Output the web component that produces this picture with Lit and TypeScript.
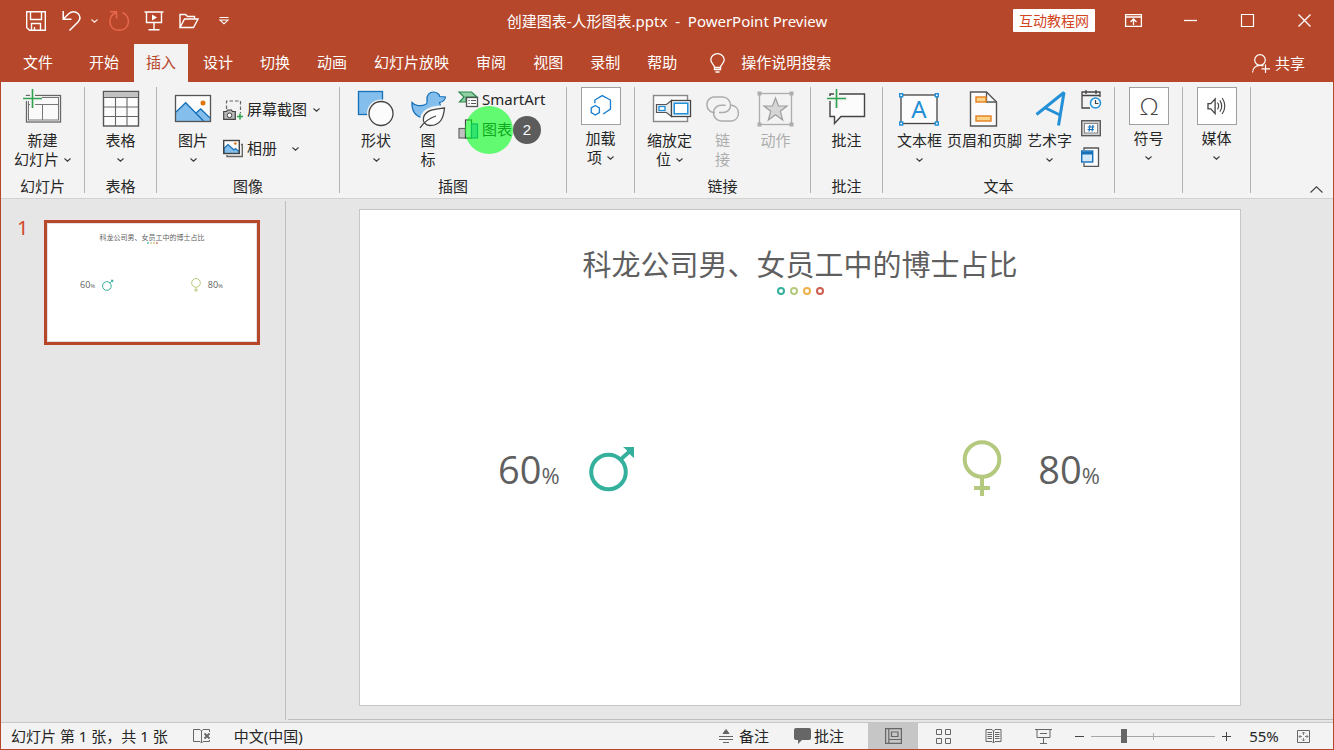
import { LitElement, html, css, svg, nothing } from "lit";
import type { TemplateResult } from "lit";
import { customElement, property, state } from "lit/decorators.js";
import { classMap } from "lit/directives/class-map.js";

const chevron = html`<svg class="chev" viewBox="0 0 7 4" aria-hidden="true">
  <path d="M.5 .5 3.5 3.2 6.5 .5" fill="none" stroke="currentColor" stroke-width="1.1" />
</svg>`;

/* 40 x 40 artwork used by the large ribbon buttons */
const art = {
  newSlide: svg`
    <rect x="4.5" y="7.5" width="34" height="26.5" fill="#fafafa" stroke="#666" stroke-width="1.300"/>
    <rect x="6.5" y="9.5" width="30" height="22.5" fill="#fafafa" stroke="#777"/>
    <path d="M7 16.5H36.500M20.500 17V32" stroke="#777"/>
    <path d="M10.500 0V20M0 10.500H20" stroke="#f3f3f3" stroke-width="5"/>
    <path d="M10.500 1V20M1 10.500H20" stroke="#2ea44f" stroke-width="1.600"/>`,
  table: svg`
    <rect x="2.500" y="3.500" width="35" height="34.500" fill="#fcfcfc" stroke="#555" stroke-width="1.400"/>
    <rect x="3" y="4" width="34" height="5" fill="#c2c2c2"/>
    <path d="M3 9.500H37M3 19H37M3 28.500H37M14.500 9.500V38M26 9.500V38" stroke="#666" stroke-width="1.100"/>`,
  picture: svg`
    <rect x="2.500" y="7.500" width="35" height="26" fill="#fcfcfc"/>
    <path d="M3 24 12.700 14.700 31 33H3Z" fill="#83beec"/>
    <path d="M22.500 26 27.700 21 37 30.500V33H29Z" fill="#83beec"/>
    <path d="M3 24 12.700 14.700 30.500 33M22.500 25.500 27.700 21 37 30" fill="none" stroke="#1670b8" stroke-width="1.300"/>
    <circle cx="30" cy="15" r="2.500" fill="#e07410"/>
    <rect x="2.500" y="7.500" width="35" height="26" fill="none" stroke="#555" stroke-width="1.300"/>`,
  shapes: svg`
    <rect x="2.500" y="3.500" width="24" height="23" fill="#83beec" stroke="#1670b8" stroke-width="1.300"/>
    <circle cx="25" cy="25.500" r="14" fill="#f3f3f3"/>
    <circle cx="25" cy="25.500" r="12" fill="#fcfcfc" stroke="#444" stroke-width="1.300"/>`,
  icons: svg`
    <path d="M4 14.500C7 18 13 18.500 17.500 16.500 19 15.500 19.500 14 19 12 18.500 7 21.500 4 25.500 4 29 4 31.500 6.500 31.800 8.500L37.500 9C37 12 34.500 14 31.500 14.500 34 20 31 28 23 29.500H14C7 28.500 3.500 22 4 14.500Z" fill="#83beec" stroke="#1670b8" stroke-width="1.200"/>
    <path d="M37 19C29 20 17 20 14.500 29 13.500 34 17 38.500 22 38.500 33 38.500 36 30 37 19Z" fill="#fcfcfc" stroke="#f3f3f3" stroke-width="4"/>
    <path d="M36.500 20C29 21 18 21 15.500 29.500 14.500 34 17.500 37.500 22 37.500 32.500 37.500 35.500 30 36.500 20Z" fill="#fcfcfc" stroke="#444" stroke-width="1.300"/>
    <path d="M12 40C16 34 20 30.500 28 28" fill="none" stroke="#444" stroke-width="1.300"/>`,
  zoom: svg`
    <rect x="3.500" y="7.500" width="34" height="26" fill="#fafafa" stroke="#888" stroke-width="1.400"/>
    <path d="M6.500 16.500H16.500L21.500 12.500V28.500L16.500 24.500H6.500Z" fill="#ededed" stroke="#555" stroke-width="1.200"/>
    <rect x="9" y="18.500" width="6" height="4" fill="#fff" stroke="#2490d8" stroke-width="1.400"/>
    <rect x="21.500" y="12.500" width="19" height="16" fill="#fff" stroke="#444" stroke-width="1.300"/>
    <rect x="24.200" y="15.200" width="13.600" height="10.600" fill="#fff" stroke="#2490d8" stroke-width="1.600"/>`,
  link: svg`
    <g fill="none" stroke="#adadad" stroke-width="1.500">
      <path d="M12 24.500H10A8 8 0 0 1 10 9H19.500A8 8 0 0 1 27.500 18C27.300 21.500 24 24.500 20 24.500H16"/>
      <path d="M27 17.300H29A8 8 0 0 1 29 33H18.500A8 8 0 0 1 10.500 24.500C10.500 20.500 14 17.300 18 17.300H22.500"/>
    </g>`,
  action: svg`
    <rect x="3.500" y="5.500" width="32" height="31" fill="none" stroke="#adadad" stroke-width="1.300"/>
    <path d="M1.500 3.500h4v4h-4zM33.500 3.500h4v4h-4zM1.500 34.500h4v4h-4zM33.500 34.500h4v4h-4z" fill="#adadad"/>
    <path d="M19.500 10 22.500 18H31L24.300 23.300 26.700 32 19.500 26.800 12.300 32 14.700 23.300 8 18H16.500Z" fill="#d6d6d6" stroke="#9d9d9d" stroke-width="1.200"/>`,
  comment: svg`
    <path d="M3 6H37.500V28.500H14L7.500 35.500V28.500H3Z" fill="#fcfcfc" stroke="#444" stroke-width="1.400"/>
    <path d="M9.500 0V20M0 10.500H20" stroke="#f3f3f3" stroke-width="5"/>
    <path d="M9.500 1V20M0 10.500H19" stroke="#2ea44f" stroke-width="1.600"/>`,
  textBox: svg`
    <rect x="2" y="7" width="36" height="28.500" fill="#fcfcfc" stroke="#444" stroke-width="1.300"/>
    <path d="M.700 5.700h3v3h-3zM36.300 5.700h3v3h-3zM.700 34h3v3h-3zM36.300 34h3v3h-3z" fill="#fff" stroke="#2490d8" stroke-width="1.400"/>
    <text x="20" y="30" text-anchor="middle" font-size="24" fill="#2490d8">A</text>`,
  headerFooter: svg`
    <path d="M6.500 4H22.500L32.500 14V38H6.500Z" fill="#fcfcfc" stroke="#555" stroke-width="1.400"/>
    <path d="M22.500 4V14H32.500" fill="none" stroke="#555" stroke-width="1.300"/>
    <rect x="12" y="9" width="10" height="5" fill="#fbd48a" stroke="#e58020" stroke-width="1.400"/>
    <rect x="12" y="28" width="15" height="5" fill="#fbd48a" stroke="#e58020" stroke-width="1.400"/>`,
  wordArt: svg`
    <path d="M6.500 26.500 34 4.500 28.500 37.500M15.500 20 30 27" fill="none" stroke="#2490d8" stroke-width="3" stroke-linejoin="bevel"/>`,
};

/* 40 x 38 artwork for the framed buttons */
const framed = {
  addIns: svg`
    <path d="M13.500 16V12.700L21.300 8 30 12.700V22.300L22.300 27.500" fill="none" stroke="#1a7fd0" stroke-width="1.400"/>
    <path d="M14 18.500 18.300 21V26L14 28.500 9.700 26V21Z" fill="none" stroke="#1a7fd0" stroke-width="1.400"/>`,
  symbol: svg`<text x="20" y="28" text-anchor="middle" font-size="26" font-weight="300" font-family="Open Sans" fill="#444">Ω</text>`,
  media: svg`
    <path d="M10.500 16.500H13.500L18 11.500V27L13.500 22H10.500Z" fill="none" stroke="#444" stroke-width="1.400"/>
    <path d="M20.500 15.500Q23 19 20.500 22.500M23 13Q27 19 23 25M25.500 10.500Q31 19 25.500 27.500" fill="none" stroke="#444" stroke-width="1.200"/>`,
};

/* 20 x 20 artwork for the small ribbon buttons */
const small = {
  screenshot: svg`
    <path d="M3.500 9V1H17.500V13" fill="none" stroke="#666" stroke-width="1.200" stroke-dasharray="3.500 2"/>
    <path d="M.700 11.500H3.500L4.500 10H8.500L9.500 11.500H12.300V19.300H.700Z" fill="#b8b8b8" stroke="#444" stroke-width="1.200"/>
    <circle cx="6.500" cy="15.300" r="2.300" fill="#fff" stroke="#444"/>
    <path d="M17 13.500V19.500M14 16.500H20" stroke="#2ea44f" stroke-width="1.600"/>`,
  album: svg`
    <path d="M18 5.500H19.300V17.500H4V16" fill="none" stroke="#666" stroke-width="1.400"/>
    <rect x=".700" y="1.500" width="15.600" height="13" fill="#fcfcfc"/>
    <path d="M1 9.500 5 5.500 11 11 12.500 9.500 16 12.500V14.500H1Z" fill="#83beec" stroke="#1670b8" stroke-width="1.200"/>
    <circle cx="12.300" cy="4.500" r="1.300" fill="#e07410"/>
    <rect x=".700" y="1.500" width="15.600" height="13" fill="none" stroke="#444" stroke-width="1.400"/>`,
  smartArt: svg`
    <path d="M1 3H13.500L19 8H8V13H1.500L6 8Z" fill="#8fd0a4" stroke="#2e8b4f" stroke-width="1.200"/>
    <rect x="8.500" y="8.500" width="11" height="9" fill="#fcfcfc" stroke="#555" stroke-width="1.300"/>
    <path d="M10.500 11.500h1.200M10.500 14.500h1.200M13 11.500h5M13 14.500h5" stroke="#555"/>`,
  chart: svg`
    <rect x="1" y="9.500" width="6.500" height="9.500" fill="#c2c2c2" stroke="#666" stroke-width="1.200"/>
    <rect x="7.500" y="1" width="6" height="18" fill="#fcfcfc" stroke="#444" stroke-width="1.200"/>
    <rect x="13.500" y="5" width="6" height="14" fill="#83beec" stroke="#1670b8" stroke-width="1.200"/>`,
  calendar: svg`
    <path d="M9 19H1V3H19V8M1 6.500H19M5 1V5M15 1V5" fill="none" stroke="#444" stroke-width="1.300"/>
    <circle cx="14.500" cy="14" r="5" fill="#fcfcfc" stroke="#2490d8" stroke-width="1.500"/>
    <path d="M14.500 11V14.500H17.500" fill="none" stroke="#444" stroke-width="1.200"/>`,
  number: svg`
    <rect x=".700" y="2.700" width="18.600" height="15" fill="#d0d0d0" stroke="#555" stroke-width="1.300"/>
    <rect x="3.500" y="5.500" width="13" height="9.500" fill="#fcfcfc" stroke="#888"/>
    <path d="M9 7 8 13.500M12 7 11 13.500M6.800 9H13.300M6.500 11.500H13" stroke="#1670b8" stroke-width="1.200"/>`,
  object: svg`
    <path d="M3 3V1H17.500V19.300H3V16" fill="#fcfcfc" stroke="#555" stroke-width="1.300"/>
    <rect x=".700" y="4" width="11" height="11" fill="#d3e8f8" stroke="#1670b8" stroke-width="1.400"/>
    <path d="M1 6H11.500" stroke="#1670b8" stroke-width="3"/>`,
};

@customElement("slide-page")
export class SlidePage extends LitElement {
  @property({ type: Boolean, reflect: true }) mini = false;

  static styles = css`
    :host {
      display: block;
      background: #fff;
      color: #5f5f5f;
      font-family: "Open Sans", "Noto Sans CJK SC", sans-serif;
    }
    .title {
      margin: 0;
      padding-top: 35px;
      font-size: 29px;
      line-height: 40px;
      font-weight: 400;
      text-align: center;
      white-space: nowrap;
    }
    .dots {
      display: flex;
      justify-content: center;
      gap: 5px;
      margin-top: 2px;
    }
    .dot {
      box-sizing: border-box;
      width: 8px;
      height: 8px;
      border: 2px solid;
      border-radius: 50%;
    }
    .teal { color: #35b09c; }
    .green { color: #b4c97e; }
    .amber { color: #eeb04c; }
    .red { color: #cd5f50; }
    .figures {
      display: flex;
      justify-content: space-between;
      margin-top: 145px;
      padding: 0 140px 0 138px;
    }
    .figure {
      display: flex;
      align-items: flex-start;
      gap: 29px;
    }
    .figure.right {
      gap: 36px;
    }
    .sign {
      display: block;
      height: 56px;
    }
    .value {
      font-size: 38px;
      line-height: 58px;
    }
    .unit {
      font-size: 22px;
    }
    :host([mini]) .title {
      padding-top: 9px;
      font-size: 7px;
      line-height: 9px;
    }
    :host([mini]) .dots {
      gap: 1px;
      margin-top: 0;
    }
    :host([mini]) .dot {
      width: 2px;
      height: 2px;
      border-width: 1px;
    }
    :host([mini]) .figures {
      margin-top: 34px;
      padding: 0 33px 0 32px;
    }
    :host([mini]) .figure {
      gap: 7px;
    }
    :host([mini]) .sign {
      height: 14px;
    }
    :host([mini]) .value {
      font-size: 9px;
      line-height: 14px;
    }
    :host([mini]) .unit {
      font-size: 6px;
    }
  `;

  render() {
    return html`
      <h2 class="title">科龙公司男、女员工中的博士占比</h2>
      <div class="dots">
        ${["teal", "green", "amber", "red"].map((c) => html`<span class="dot ${c}"></span>`)}
      </div>
      <div class="figures">
        <div class="figure">
          <span class="value">60<span class="unit">%</span></span>
          <svg class="sign teal" viewBox="0 0 46 56" role="img" aria-label="男">
            <circle cx="19.500" cy="32" r="17.300" fill="none" stroke="currentColor" stroke-width="4"/>
            <path d="M31 20 40 12" stroke="currentColor" stroke-width="4"/>
            <path d="M34 7H45V18L42 15.500 37 9.500Z" fill="currentColor"/>
          </svg>
        </div>
        <div class="figure right">
          <svg class="sign green" viewBox="0 0 40 56" role="img" aria-label="女">
            <circle cx="20" cy="19.500" r="17.300" fill="none" stroke="currentColor" stroke-width="4"/>
            <path d="M20 38V56M12 48H28" stroke="currentColor" stroke-width="4"/>
          </svg>
          <span class="value">80<span class="unit">%</span></span>
        </div>
      </div>
    `;
  }
}

@customElement("app-root")
export class AppRoot extends LitElement {
  @state() private tab = "插入";

  static styles = css`
    :host {
      display: block;
      font-family: "Noto Sans", "Noto Sans CJK SC", sans-serif;
      font-size: 15px;
      line-height: 19px;
      color: #262626;
    }
    * { box-sizing: border-box; }
    svg { display: block; flex: none; overflow: visible; }
    button {
      margin: 0;
      padding: 0;
      border: 0;
      background: none;
      color: inherit;
      font: inherit;
    }
    .app {
      display: flex;
      flex-direction: column;
      height: 100vh;
      border: 1px solid #b7472a;
      background: #e6e6e6;
      overflow: hidden;
    }
    .chev { width: 7px; height: 4px; opacity: 0.9; }

    /* title bar */
    .titlebar {
      display: grid;
      grid-template-columns: 1fr auto 1fr;
      align-items: center;
      height: 43px;
      padding-bottom: 4px;
      background: #b7472a;
      color: #fff;
    }
    .quick { display: flex; align-items: center; padding-left: 17px; }
    .qbtn { display: flex; justify-content: center; width: 35px; }
    .qbtn.narrow { width: 13px; }
    .qbtn.off { color: #e8684d; }
    .doc { padding-top: 2px; white-space: pre; }
    .window { display: flex; justify-content: flex-end; align-items: center; }
    .brand {
      margin-right: 10px;
      padding: 2px 6px;
      border-radius: 1px;
      background: #fff;
      color: #d2451e;
      font-size: 14px;
      text-decoration: none;
    }
    .wbtn { display: flex; justify-content: center; width: 57px; }

    /* tabs */
    .tabs {
      display: flex;
      gap: 3px;
      height: 38px;
      padding-left: 1px;
      background: #b7472a;
      color: #fff;
    }
    .tab { padding: 0 12px 2px; white-space: nowrap; }
    .tab.file { padding: 0 21px 2px; }
    .tab.active { background: #f3f3f3; color: #b7472a; }
    .tell { display: flex; align-items: center; gap: 16px; margin-left: 18px; padding-bottom: 1px; }
    .share { display: flex; align-items: center; gap: 5px; margin: 0 28px 0 auto; }

    /* ribbon */
    .ribbon {
      display: flex;
      flex: none;
      height: 117px;
      padding: 5px 0;
      border-bottom: 1px solid #d2d2d2;
      background: #f3f3f3;
    }
    .group {
      display: flex;
      flex: none;
      flex-direction: column;
      justify-content: space-between;
      border-right: 1px solid #b4b4b4;
    }
    .w68 { width: 68px; }
    .w72 { width: 72px; }
    .w84 { width: 84px; }
    .w176 { width: 176px; }
    .w183 { width: 183px; }
    .w227 { width: 227px; }
    .w232 { width: 232px; }
    .items { display: flex; justify-content: center; }
    .items.start { justify-content: flex-start; padding-left: 10px; }
    .items.text { gap: 5px; padding-left: 1px; }
    .caption { line-height: 14px; text-align: center; }
    .big {
      display: flex;
      flex-direction: column;
      align-items: center;
      white-space: nowrap;
    }
    .big:disabled { color: #adadad; }
    .w46 { width: 46px; }
    .w52 { width: 52px; }
    .w60 { width: 60px; }
    .art { width: 40px; height: 44px; padding: 1px 0 3px; }
    .frame {
      width: 40px;
      height: 38px;
      margin-bottom: 4px;
      border: 1px solid #a0a0a0;
      background: #fff;
    }
    .line { display: flex; align-items: center; justify-content: center; gap: 5px; min-height: 19px; }
    .stack { display: flex; flex-direction: column; align-items: flex-start; margin-left: 4px; }
    .row {
      position: relative;
      display: flex;
      align-items: center;
      gap: 4px;
      white-space: nowrap;
    }
    .row .chev { margin-left: 2px; }
    .row .chev.far { margin-left: 11px; }
    .tall { padding-top: 3px; }
    .tall .row { height: 39px; }
    .short { gap: 6px; }
    .short .row { height: 24px; }
    .mini { gap: 9px; padding-top: 2px; }
    .ico { width: 20px; height: 20px; }
    .halo {
      position: absolute;
      top: -11px;
      left: 7px;
      width: 48px;
      height: 48px;
      border-radius: 50%;
      background: rgba(0, 255, 25, 0.6);
    }
    .step {
      position: absolute;
      top: -1px;
      left: 55px;
      width: 28px;
      height: 28px;
      border-radius: 50%;
      background: #5c5c5c;
      color: #fff;
      font: 15px/28px "Liberation Sans", sans-serif;
      text-align: center;
    }
    .collapse { align-self: flex-end; margin: 0 10px 0 auto; }

    /* work area */
    .work { display: flex; flex: 1; min-height: 0; }
    .outline {
      display: flex;
      align-items: flex-start;
      flex: none;
      width: 285px;
      margin: 2px 0;
      padding: 19px 25px 0 16px;
      border-right: 1px solid #bebebe;
    }
    .num { width: 27px; font-size: 20px; line-height: 16px; color: #d24726; }
    .thumb {
      flex: 1;
      border: 3px solid #b7472a;
      padding: 1px;
      background: #e2e2e2;
    }
    .thumb slide-page { height: 117px; }
    .stage {
      display: flex;
      justify-content: center;
      flex: 1;
      min-width: 0;
      margin: 0 0 2px 2px;
      padding: 10px 21px 13px 0;
      border-bottom: 1px solid #bebebe;
    }
    .page {
      box-sizing: content-box;
      aspect-ratio: 16 / 9;
      border: 1px solid #c6c6c6;
    }

    /* status bar */
    .status {
      display: flex;
      align-items: center;
      flex: none;
      height: 27px;
      border-top: 1px solid #c6c6c6;
      background: #f3f3f3;
      white-space: nowrap;
    }
    .status svg { color: #666; }
    .where { margin-left: 10px; }
    .spell { margin: 0 23px 0 25px; }
    .right { display: flex; align-items: center; height: 100%; margin-left: auto; }
    .sbtn { display: flex; align-items: center; gap: 6px; margin-right: 24px; }
    .sbtn.tight { gap: 3px; }
    .view { display: flex; align-items: center; justify-content: center; width: 50px; height: 100%; }
    .view.on { background: #c6c6c6; }
    .step-btn { width: 23px; display: flex; justify-content: center; }
    .slider {
      appearance: none;
      width: 124px;
      height: 14px;
      margin: 0;
      background:
        linear-gradient(#b0b0b0, #b0b0b0) center / 1px 7px no-repeat,
        linear-gradient(#a6a6a6, #a6a6a6) center / 100% 1px no-repeat;
    }
    .slider::-webkit-slider-thumb {
      appearance: none;
      width: 6px;
      height: 14px;
      background: #666;
    }
    .pct { width: 32px; margin: 0 17px 0 10px; }
    .fit { margin-right: 23px; }
  `;

  private big(
    label: string,
    icon: unknown,
    opts: { line2?: string; drop?: boolean; cls?: string; off?: boolean; frame?: boolean } = {},
  ): TemplateResult {
    const { line2, drop, cls = "", off = false, frame = false } = opts;
    return html`<button class="big ${cls}" ?disabled=${off}>
      <svg class=${frame ? "frame" : "art"} viewBox=${frame ? "0 0 40 38" : "0 0 40 40"} aria-hidden="true">${icon}</svg>
      <span class="line">${label}</span>
      ${line2 || drop ? html`<span class="line">${line2 ?? nothing}${drop ? chevron : nothing}</span>` : nothing}
    </button>`;
  }

  private ico(icon: unknown) {
    return html`<svg class="ico" viewBox="0 0 20 20" aria-hidden="true">${icon}</svg>`;
  }

  private group(width: string, caption: string, body: unknown, cls = "") {
    return html`<section class="group ${width}">
      <div class="items ${cls}">${body}</div>
      <div class="caption">${caption}</div>
    </section>`;
  }

  private renderTitle() {
    return html`<header class="titlebar">
      <div class="quick">
        <button class="qbtn" aria-label="保存">
          <svg width="20" height="20" viewBox="0 0 20 20" fill="none" stroke="currentColor" stroke-width="1.400">
            <path d="M.700 .700H19.300V19.300H3.500L.700 16.500ZM4.500 1V8.500H15.500V1M5.500 19V12.500H14.500V19M8.500 16V19"/>
          </svg>
        </button>
        <button class="qbtn" aria-label="撤消">
          <svg width="20" height="20" viewBox="0 0 20 20" fill="none" stroke="currentColor" stroke-width="1.500">
            <path d="M2.200 0V8.200H10.500M2.500 7.800 8 2.500C10.500 0 14.500 0 17 2.500 19.500 5.200 19.300 8.500 17 11L8.500 19.500"/>
          </svg>
        </button>
        <button class="qbtn narrow" aria-label="撤消选项">${chevron}</button>
        <button class="qbtn off" aria-label="重复">
          <svg width="22" height="20" viewBox="0 0 22 20" fill="none" stroke="currentColor" stroke-width="1.500">
            <path d="M2 .800H8.500V7.500M8 1.500C-1.500 6 .500 19.200 11 19.200 21.500 19.200 24 6 14.500 1.500"/>
          </svg>
        </button>
        <button class="qbtn" aria-label="从头开始">
          <svg width="20" height="20" viewBox="0 0 20 20" fill="none" stroke="currentColor" stroke-width="1.400">
            <path d="M.500 1H19.500M2.500 1V11.500H17.500V1M10 12V18.500M4.500 18.800H15.500"/>
            <path d="M8 3.500 13 6.500 8 9.500Z" fill="currentColor" stroke="none"/>
          </svg>
        </button>
        <button class="qbtn" aria-label="打开">
          <svg width="20" height="16" viewBox="0 0 20 16" fill="none" stroke="currentColor" stroke-width="1.400">
            <path d="M1 14.500V1.500H6.500L8.500 3.500H15.500V6M1 14.500 5.500 6H19L14.500 14.500Z"/>
          </svg>
        </button>
        <button class="qbtn" aria-label="自定义快速访问工具栏">
          <svg width="10" height="7" viewBox="0 0 10 7" fill="none" stroke="currentColor" stroke-width="1.100">
            <path d="M.500 .500H9.500M1 3 5 6.800 9 3Z"/>
          </svg>
        </button>
      </div>
      <div class="doc">创建图表-人形图表.pptx  -  PowerPoint Preview</div>
      <div class="window">
        <a class="brand" href="#">互动教程网</a>
        <button class="wbtn" aria-label="功能区显示选项">
          <svg width="17" height="13" viewBox="0 0 17 13" fill="none" stroke="currentColor" stroke-width="1.300">
            <path d="M.600 .600H16.400V12.400H.600ZM.600 3H16.400M8.500 11V5.500M5.500 8 8.500 5 11.500 8"/>
          </svg>
        </button>
        <button class="wbtn" aria-label="最小化">
          <svg width="13" height="13" viewBox="0 0 13 13"><path d="M0 6.500H13" stroke="currentColor" stroke-width="1.300"/></svg>
        </button>
        <button class="wbtn" aria-label="最大化">
          <svg width="13" height="13" viewBox="0 0 13 13"><path d="M.500 .500H12.500V12.500H.500Z" fill="none" stroke="currentColor" stroke-width="1.200"/></svg>
        </button>
        <button class="wbtn" aria-label="关闭">
          <svg width="13" height="13" viewBox="0 0 13 13"><path d="M.500 .500 12.500 12.500M12.500 .500 .500 12.500" stroke="currentColor" stroke-width="1.400"/></svg>
        </button>
      </div>
    </header>`;
  }

  private renderTabs() {
    const tabs = ["文件", "开始", "插入", "设计", "切换", "动画", "幻灯片放映", "审阅", "视图", "录制", "帮助"];
    return html`<nav class="tabs">
      ${tabs.map(
        (t) => html`<button
          class=${classMap({ tab: true, file: t === "文件", active: t === this.tab })}
          @click=${() => (this.tab = t)}
        >${t}</button>`,
      )}
      <button class="tell">
        <svg width="15" height="20" viewBox="0 0 15 20" fill="none" stroke="currentColor" stroke-width="1.300">
          <path d="M4.500 14.500C4.500 11.500 .800 10.500 .800 6.800A6.700 6.200 0 0 1 14.200 6.800C14.200 10.500 10.500 11.500 10.500 14.500V16.500H4.500ZM4.500 14.500H10.500M5.500 19H9.500"/>
        </svg>操作说明搜索
      </button>
      <button class="share">
        <svg width="18" height="19" viewBox="0 0 18 19" fill="none" stroke="currentColor" stroke-width="1.200">
          <circle cx="8" cy="6" r="5.300"/>
          <path d="M.600 18.500C.600 14.500 3.500 11.300 8 11.300 9.500 11.300 10.500 11.500 11.500 12M13.500 10.500V19M9.500 14.800H18"/>
        </svg>共享
      </button>
    </nav>`;
  }

  private renderRibbon() {
    return html`<div class="ribbon">
      ${this.group("w84", "幻灯片", this.big("新建", art.newSlide, { line2: "幻灯片", drop: true }))}
      ${this.group("w72", "表格", this.big("表格", art.table, { drop: true }))}
      ${this.group(
        "w183",
        "图像",
        html`${this.big("图片", art.picture, { drop: true, cls: "w52" })}
          <div class="stack tall">
            <button class="row">${this.ico(small.screenshot)}屏幕截图${chevron}</button>
            <button class="row">
              ${this.ico(small.album)}相册<svg class="chev far" viewBox="0 0 7 4" aria-hidden="true">
                <path d="M.500 .500 3.500 3.200 6.500 .500" fill="none" stroke="currentColor" stroke-width="1.1" />
              </svg>
            </button>
          </div>`,
        "start",
      )}
      ${this.group(
        "w227",
        "插图",
        html`${this.big("形状", art.shapes, { drop: true, cls: "w52" })}
          ${this.big("图", art.icons, { line2: "标", cls: "w52" })}
          <div class="stack short">
            <button class="row">${this.ico(small.smartArt)}SmartArt</button>
            <button class="row">
              ${this.ico(small.chart)}图表<span class="halo"></span><span class="step">2</span>
            </button>
          </div>`,
        "start",
      )}
      ${this.group("w68", "", this.big("加载", framed.addIns, { line2: "项", drop: true, frame: true }))}
      ${this.group(
        "w176",
        "链接",
        html`${this.big("缩放定", art.zoom, { line2: "位", drop: true, cls: "w60" })}
          ${this.big("链", art.link, { line2: "接", off: true, cls: "w46" })}
          ${this.big("动作", art.action, { off: true, cls: "w60" })}`,
      )}
      ${this.group("w72", "批注", this.big("批注", art.comment))}
      ${this.group(
        "w232",
        "文本",
        html`${this.big("文本框", art.textBox, { drop: true })}
          ${this.big("页眉和页脚", art.headerFooter)}
          ${this.big("艺术字", art.wordArt, { drop: true })}
          <div class="stack mini">
            <button aria-label="日期和时间">${this.ico(small.calendar)}</button>
            <button aria-label="幻灯片编号">${this.ico(small.number)}</button>
            <button aria-label="对象">${this.ico(small.object)}</button>
          </div>`,
        "text",
      )}
      ${this.group("w68", "", this.big("符号", framed.symbol, { drop: true, frame: true }))}
      ${this.group("w68", "", this.big("媒体", framed.media, { drop: true, frame: true }))}
      <button class="collapse" aria-label="折叠功能区">
        <svg width="13" height="7" viewBox="0 0 13 7"><path d="M.500 6.500 6.500 .800 12.500 6.500" fill="none" stroke="#444" stroke-width="1.200"/></svg>
      </button>
    </div>`;
  }

  private renderStatus() {
    return html`<footer class="status">
      <span class="where">幻灯片 第 1 张，共 1 张</span>
      <button class="spell" aria-label="拼写检查">
        <svg width="18" height="14" viewBox="0 0 18 14" fill="none" stroke="currentColor">
          <path d="M8.500 2 7 .500H.500V12.500H7L8.500 14 10 12.500H16.500V11M8.500 2V13.500M8.500 2 10 .500H16.500V3"/>
          <path d="M11.500 4.500 16.500 9.500M16.500 4.500 11.500 9.500" stroke-width="1.800"/>
        </svg>
      </button>
      <button>中文(中国)</button>
      <div class="right">
        <button class="sbtn">
          <svg width="14" height="14" viewBox="0 0 14 14" fill="none" stroke="currentColor">
            <path d="M7 .500 10 4.500H4Z" fill="currentColor"/><path d="M0 7.500H14M0 10.500H14M4 13.500H10"/>
          </svg>备注
        </button>
        <button class="sbtn tight">
          <svg width="18" height="16" viewBox="0 0 18 16"><path d="M3 0H16Q18 0 18 2V10Q18 12 16 12H9L5 16V12H3Q1 12 1 10V2Q1 0 3 0Z" fill="currentColor"/></svg>批注
        </button>
        <button class="view on" aria-label="普通视图">
          <svg width="17" height="16" viewBox="0 0 17 16" fill="none" stroke="currentColor" stroke-width="1.200">
            <path d="M.600 .600H16.400V15.400H.600ZM3.800 .600V15.400M4 11.500H16.400M6.500 4H13V8.500H6.500Z"/>
          </svg>
        </button>
        <button class="view" aria-label="幻灯片浏览">
          <svg width="17" height="15" viewBox="0 0 17 15" fill="none" stroke="currentColor">
            <path d="M1.500 .500h5v5h-5zM10.500 .500h5v5h-5zM1.500 9.500h5v5h-5zM10.500 9.500h5v5h-5z"/>
          </svg>
        </button>
        <button class="view" aria-label="阅读视图">
          <svg width="17" height="15" viewBox="0 0 17 15" fill="none" stroke="currentColor">
            <path d="M8.500 2 7 .500H1V12.500H7L8.500 14 10 12.500H16V.500H10ZM8.500 2V14M2.500 3.500h4.500M2.500 5.500h4.500M2.500 7.500h4.500M2.500 9.500h4.500M10 3.500h4.500M10 5.500h4.500M10 7.500h4.500M10 9.500h4.500"/>
          </svg>
        </button>
        <button class="view" aria-label="幻灯片放映">
          <svg width="17" height="15" viewBox="0 0 17 15" fill="none" stroke="currentColor">
            <path d="M0 .500H17M2 .500V8.500H15V.500M8.500 8.500V14.500M5 14.500H12M5 4.500H12"/>
          </svg>
        </button>
        <button class="step-btn" aria-label="缩小">
          <svg width="9" height="9" viewBox="0 0 9 9"><path d="M0 4.500H9" stroke="#444"/></svg>
        </button>
        <input class="slider" type="range" min="0" max="100" value="25" aria-label="显示比例" />
        <button class="step-btn" aria-label="放大">
          <svg width="9" height="9" viewBox="0 0 9 9"><path d="M0 4.500H9M4.500 0V9" stroke="#444"/></svg>
        </button>
        <button class="pct">55%</button>
        <button class="fit" aria-label="使幻灯片适应当前窗口">
          <svg width="13" height="13" viewBox="0 0 13 13" fill="none" stroke="currentColor">
            <path d="M.500 .500H12.500V12.500H.500Z"/>
            <path d="M6.500 2V5M5 3.500 6.500 2 8 3.500M6.500 11V8M5 9.500 6.500 11 8 9.500M2 6.500H5M3.500 5 2 6.500 3.500 8M11 6.500H8M9.500 5 11 6.500 9.500 8" stroke-width=".8"/>
          </svg>
        </button>
      </div>
    </footer>`;
  }

  render() {
    return html`<div class="app">
      ${this.renderTitle()} ${this.renderTabs()} ${this.renderRibbon()}
      <main class="work">
        <aside class="outline">
          <span class="num">1</span>
          <div class="thumb"><slide-page mini></slide-page></div>
        </aside>
        <div class="stage"><slide-page class="page"></slide-page></div>
      </main>
      ${this.renderStatus()}
    </div>`;
  }
}
